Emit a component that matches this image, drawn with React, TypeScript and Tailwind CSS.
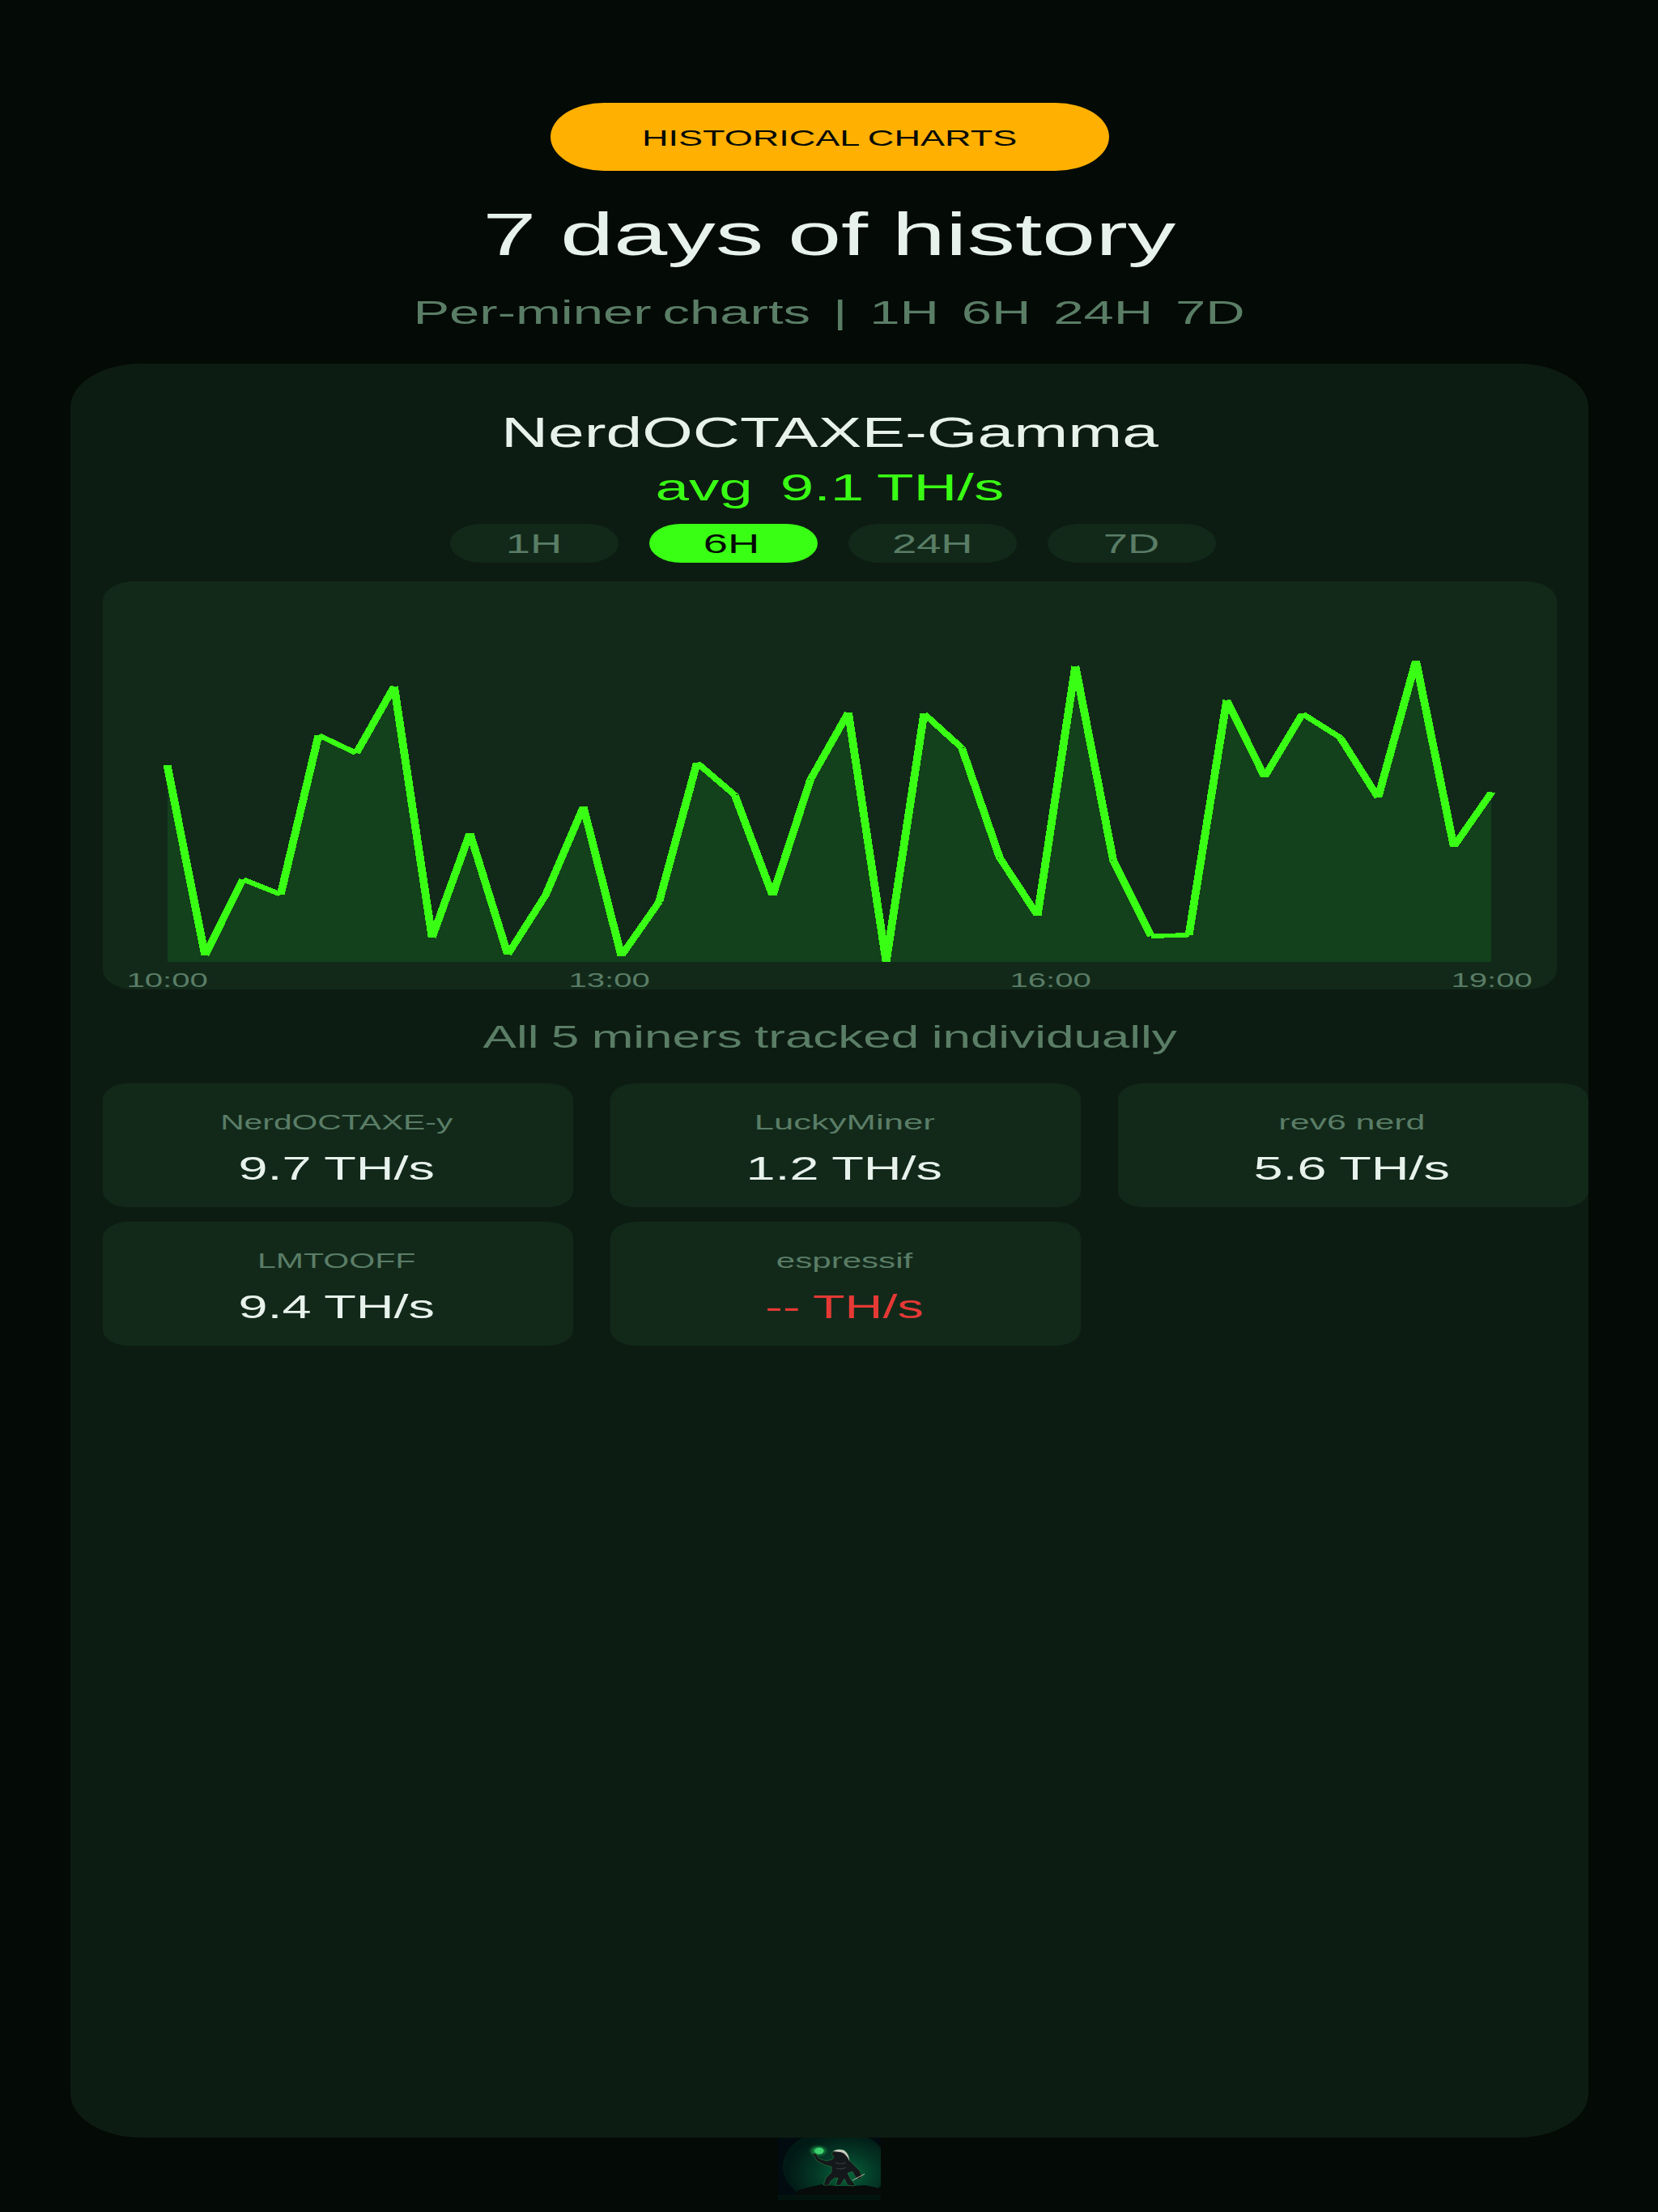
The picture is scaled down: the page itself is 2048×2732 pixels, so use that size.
import { clsx } from "clsx";

type Miner = { name: string; rate: string; stretch: string; offline?: boolean };

const ranges = ["1H", "6H", "24H", "7D"];

const miners: Miner[] = [
  { name: "NerdOCTAXE-y", rate: "9.7 TH/s", stretch: "scale-x-[1.6]" },
  { name: "LuckyMiner", rate: "1.2 TH/s", stretch: "scale-x-[1.71]" },
  { name: "rev6 nerd", rate: "5.6 TH/s", stretch: "scale-x-[1.68]" },
  { name: "LMTOOFF", rate: "9.4 TH/s", stretch: "scale-x-[1.61]" },
  { name: "espressif", rate: "-- TH/s", stretch: "scale-x-[1.65]", offline: true },
];

const ticks = ["10:00", "13:00", "16:00", "19:00"];

// hashrate samples as y offsets inside the chart panel
const samples = [
  227, 462, 368, 386.6, 190, 212.2, 129.7, 440, 311, 461, 387.5, 278.5,
  462.5, 395.8, 224, 264, 388, 244.7, 162, 469.8, 163.5, 205.8, 341.3, 412.5,
  104.7, 344.4, 438.3, 436.7, 146.6, 241.5, 163.5, 193, 267, 98, 327.5, 260.5,
];

const STRETCH = 1.8;
const LEFT = 79.5;
const STEP = 1636 / 35;
const BASE = 470;

function Wide({ className, children }: { className?: string; children: React.ReactNode }) {
  return (
    <span className={clsx("inline-block whitespace-pre", className ?? "scale-x-[1.62] [word-spacing:-0.03em]")}>
      {children}
    </span>
  );
}

function HashrateChart() {
  const points = samples.map((y, i) => [(LEFT + i * STEP) / STRETCH, y]);
  const area =
    points.map(([x, y], i) => `${i ? "L" : "M"}${x} ${y}`).join("") +
    `L${points[35][0]} ${BASE}L${points[0][0]} ${BASE}Z`;
  const line = points
    .slice(1)
    .map(([x, y], i) => `M${points[i][0]} ${points[i][1]}L${x} ${y}`)
    .join("");

  return (
    <svg className="block" width="1796" height="470" viewBox="0 0 1796 470" shapeRendering="crispEdges">
      <g transform={`scale(${STRETCH} 1)`}>
        <path d={area} fill="#13411b" />
        <path d={line} fill="none" stroke="#39ff14" strokeWidth="5.5" />
      </g>
    </svg>
  );
}

function Logo() {
  return (
    <svg className="block" width="127" height="77" viewBox="0 0 127 77">
      <defs>
        <radialGradient id="haze" cx="0.6" cy="0.6" r="0.55">
          <stop offset="0" stopColor="#06663d" />
          <stop offset="0.5" stopColor="#043a27" />
          <stop offset="1" stopColor="#021a15" />
        </radialGradient>
        <radialGradient id="orb">
          <stop offset="0" stopColor="#5ff08a" />
          <stop offset="0.4" stopColor="#1a9a48" />
          <stop offset="1" stopColor="#0a5a30" stopOpacity="0" />
        </radialGradient>
        <clipPath id="scene">
          <rect width="127" height="71" />
        </clipPath>
      </defs>
      <rect width="127" height="77" fill="#03140e" />
      <g clipPath="url(#scene)">
        <rect width="127" height="71" fill="#020c10" />
        <ellipse cx="71" cy="36" rx="65" ry="46" fill="url(#haze)" />
        <ellipse cx="50" cy="16.500" rx="13" ry="8" fill="url(#orb)" />
        <ellipse cx="51" cy="16.500" rx="5.500" ry="4" fill="#3fd070" />
        <path d="M22 71L25 65L40 61L54 58L72 60L90 60L108 59L122 62L127 64V71Z" fill="#070b0a" />
        {/* honey badger */}
        <path
          d="M42 19L47 20L51 26L60 29L67 27L69 24L66 20L68 17L74 15L82 16L87 22L88 28L94 34L101 41L104 48L100 52L95 48L92 42L86 44L90 52L95 58L94 60L86 59L82 51L77 59L71 59L74 50L70 50L65 54L63 59L56 59L59 50L66 43L66 36L58 34L48 29Z"
          fill="#15181b"
          stroke="#2d8a42"
          strokeWidth="0.5"
        />
        <path d="M68 17Q74 13 82 16Q88 21 88 29Q84 19 77 18Z" fill="#c9ccc2" />
        <path d="M71 31Q77 34 84 31M72 38Q78 40 84 37" fill="none" stroke="#343a3d" strokeWidth="1.200" />
        <path d="M92 53L107 45" stroke="#b9b5a4" strokeWidth="1" />
      </g>
    </svg>
  );
}

export default function App() {
  return (
    <div className="flex h-[2732px] w-[2048px] flex-col items-center overflow-hidden bg-[#040a06] pt-[127px] pl-px font-['Liberation_Sans',Arial,sans-serif] text-[#e8f2ec]">
      <div className="flex h-[84px] w-[690px] items-center justify-center rounded-[66px/42px] bg-[#ffb000] pt-[3px] text-[28.500px] leading-none text-[#040a06]">
        <Wide className="scale-x-[1.58] [word-spacing:-0.03em]">HISTORICAL CHARTS</Wide>
      </div>
      <h1 className="mt-9 text-[73.500px] leading-[86px]">
        <Wide>7 days of history</Wide>
      </h1>
      <p className="mt-7 text-[41.500px] leading-[49px] text-[#5a7d66]">
        <Wide className="scale-x-[1.615] [word-spacing:-0.07em]">{"Per-miner charts  |  1H  6H  24H  7D"}</Wide>
      </p>

      <main className="mt-[39px] flex h-[2191px] w-[1875px] shrink-0 flex-col items-center rounded-[88px/54px] bg-[#0d1c12] pt-[55px] pr-[39px] pl-10">
        <h2 className="text-[51.500px] leading-[61px]">
          <Wide className="scale-x-[1.562]">NerdOCTAXE-Gamma</Wide>
        </h2>
        <p className="mt-2.5 text-[46px] leading-[54px] text-[#39ff14]">
          <Wide className="scale-x-[1.62] [word-spacing:-0.05em]">{"avg  9.1 TH/s"}</Wide>
        </p>

        <div className="mt-[18px] flex gap-[38px] pl-[7px]">
          {ranges.map((r) => (
            <button
              key={r}
              className={clsx(
                "h-12 w-[208px] rounded-[39px/24px] text-[33.500px] leading-[49px]",
                r === "6H" ? "bg-[#39ff14] pr-1 text-[#040a06]" : "bg-[#12291a] text-[#5a7d66]"
              )}
            >
              <Wide>{r}</Wide>
            </button>
          ))}
        </div>

        <section className="mt-[23px] h-[504px] w-[1796px] rounded-[39px/24px] bg-[#12291a]">
          <HashrateChart />
          <div className="flex justify-between px-[25px] pt-[11px] text-[24.500px] leading-[23px] text-[#5a7d66]">
            {ticks.map((t) => (
              <span key={t} className="w-[110px] text-center">
                <Wide className="scale-x-[1.64]">{t}</Wide>
              </span>
            ))}
          </div>
        </section>

        <p className="mt-[35px] text-[38.500px] leading-[47px] text-[#5a7d66]">
          <Wide className="scale-x-[1.61] [word-spacing:-0.03em]">All 5 miners tracked individually</Wide>
        </p>

        <div className="mt-[34px] grid w-full grid-cols-[repeat(3,581px)] gap-x-[46px] gap-y-[18px]">
          {miners.map((m) => (
            <div key={m.name} className="h-[153px] rounded-[32px/20px] bg-[#12291a] pt-[30px] pr-[3px] text-center">
              <div className="text-[25.500px] leading-[36px] text-[#5a7d66]">
                <Wide className={m.stretch}>{m.name}</Wide>
              </div>
              <div className={clsx("mt-[17px] text-[40.500px] leading-[44px]", m.offline && "text-[#e53935]")}>
                <Wide className="scale-x-[1.6] [word-spacing:-0.02em]">{m.rate}</Wide>
              </div>
            </div>
          ))}
        </div>
      </main>

      <Logo />
    </div>
  );
}
